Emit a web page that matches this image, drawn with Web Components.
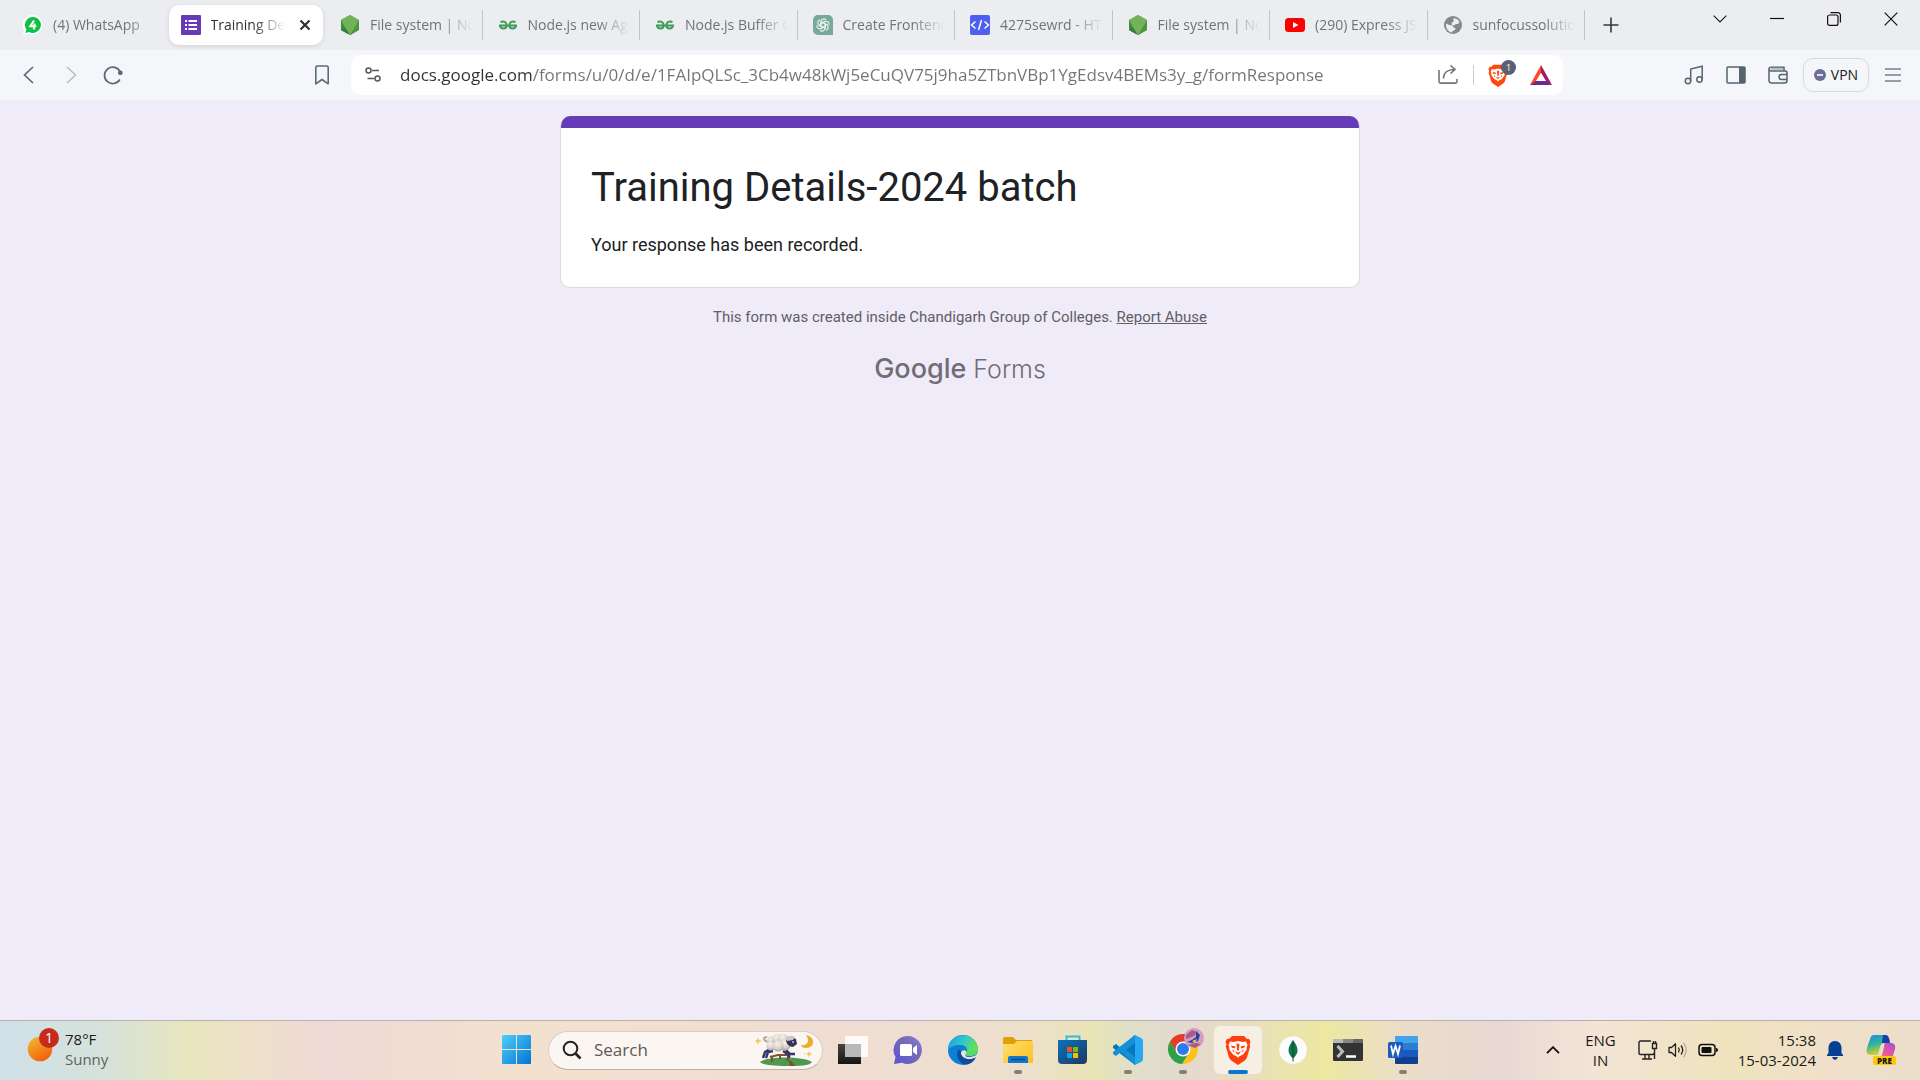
<!DOCTYPE html>
<html lang="en">
<head>
<meta charset="utf-8">
<title>Training Details-2024 batch</title>
<style>
html, body { height: 100%; margin: 0; }
body { font-family: "Open Sans", "Noto Sans", sans-serif; font-size: 15px; line-height: 20px; overflow: hidden; }
</style>
</head>
<body>
<desktop-screen></desktop-screen>
<script>
const svg = (w, h, body, extra = '') => `<svg width="${w}" height="${h}" viewBox="0 0 ${w} ${h}" fill="none" aria-hidden="true" ${extra}>${body}</svg>`;
const braveLion = (bg) => `<path d="M7 1h12l3 3 2-.3 1.500 3.300-1 2.500.7 2-3.400 11.500-2 2.500-6.800 4.500-6.800-4.500-2-2.500L.8 11.500l.7-2-1-2.500L2 3.700 4 4z" fill="${bg}"/><path d="M5 6.500l3.500.6L13 6l4.500 1.100 3.500-.6 1.500 3.500-1 3 .3 1.500-3.800 5-4 2L13 23l-1-1.500-4-2-3.800-5 .3-1.500-1-3z" fill="#fff"/><path d="M6 10.500l4.500.9-.8 2-3-.8zM20 10.500l-4.500.9.8 2 3-.8zM11.500 8.500l1.500.5 1.500-.5-.6 7h-1.800zM10 16.200l3 1.400 3-1.400-2.200 3.200h-1.600zM8 14l1.600 3.500L7.500 16zM18 14l-1.600 3.500 2.100-1.500z" fill="${bg}"/>`;
const ICONS = {
  whatsapp: svg(20, 20, '<path d="M10 0a9.800 9.800 0 1 1-4.500 18.700L0 20l1.200-5A9.800 9.800 0 0 1 10 0z" fill="#fff"/><path d="M10 2a8 8 0 1 1-4 15l-3.600 1 .9-3.600A8 8 0 0 1 10 2z" fill="#0cc143"/><path d="M11 5.500L7.300 11.200h6M11.700 8.500L10.800 14.500" stroke="#fff" stroke-width="2"/>'),
  forms: svg(20, 20, '<rect width="20" height="20" rx="1" fill="#673ab7"/><path d="M4 6h2M4 10h2M4 14h2M7.500 6H16M7.500 10H16M7.500 14H16" stroke="#fff" stroke-width="2.200"/>'),
  node: svg(20, 20, '<path d="M10 0l9 5v10l-9 5-9-5V5z" fill="#5aa348"/><path d="M10 0l9 5-7.500 15-1.500 0L1 5z" fill="#72b35a"/><path d="M1 5l7 14-7-4z" fill="#3f8a40"/><path d="M1 15l4-2.500L10 20z" fill="#34803a"/><path d="M19 5v10l-9 5z" fill="#4f9442"/>'),
  gfg: svg(20, 20, '<g stroke="#3f9c5a" stroke-width="2"><path d="M2.500 7C5.500 5.500 8.700 7 8.700 10.500 8.500 14.500 2.500 14.500 2 10.500M17.500 7C14.500 5.500 11.300 7 11.300 10.500 11.500 14.500 17.500 14.500 18 10.500M1 10.500h18"/></g>'),
  chatgpt: svg(20, 20, '<path d="M5 0h10a5 5 0 0 1 5 5v15H5a5 5 0 0 1-5-5V5a5 5 0 0 1 5-5z" fill="#75a99a"/><g stroke="#e6f0ec" stroke-width="1.200"><path d="M8 11.500V6.500a3 3 0 0 1 5-1.800M12.500 6L8 8.500"/><path d="M8 11.500V6.500a3 3 0 0 1 5-1.800M12.500 6L8 8.500" transform="rotate(60 10 10)"/><path d="M8 11.500V6.500a3 3 0 0 1 5-1.800M12.500 6L8 8.500" transform="rotate(120 10 10)"/><path d="M8 11.500V6.500a3 3 0 0 1 5-1.800M12.500 6L8 8.500" transform="rotate(180 10 10)"/><path d="M8 11.500V6.500a3 3 0 0 1 5-1.800M12.500 6L8 8.500" transform="rotate(240 10 10)"/><path d="M8 11.500V6.500a3 3 0 0 1 5-1.800M12.500 6L8 8.500" transform="rotate(300 10 10)"/></g>'),
  code: svg(20, 20, '<rect width="20" height="20" rx="2" fill="#4c5ff0"/><path d="M5.500 6.500L1.500 10l4 3.500M14.500 6.500l4 3.500-4 3.500M11.500 5l-3 10" stroke="#fff" stroke-width="1.500"/>'),
  youtube: svg(20, 20, '<rect y="3" width="20" height="14" rx="3.500" fill="#f00"/><path d="M8 7l5.500 3L8 13z" fill="#fff"/>'),
  globe: svg(20, 20, '<circle cx="10" cy="10" r="9" fill="#858789"/><path d="M10.500 3.200c3 0 5 1.600 6 3.800l-1.500 2h-2.500l-1 1.500-2.500-.5-.5-2 2-1.500zM3 8.500l3.500 1.500 3 .5 1 2 2 .5-.5 2-2.500 1-.5 1.500c-3.500-.5-6.500-4-6-9z" fill="#ecedf1"/>'),
  close: svg(12, 12, '<path d="M1.500 1.500l9 9m0-9l-9 9" stroke="#2f3034" stroke-width="2.200"/>'),
  plus: svg(16, 16, '<path d="M8 .5v15M.5 8h15" stroke="#35363a" stroke-width="1.600"/>'),
  caret: svg(14, 8, '<path d="M.7.7L7 7 13.300.7" stroke="#222" stroke-width="1.200"/>'),
  minimize: svg(14, 14, '<path d="M0 6.500h14" stroke="#111" stroke-width="1.200"/>'),
  restore: svg(14, 14, '<rect x=".6" y="3" width="10.400" height="10.400" rx="2" stroke="#111" stroke-width="1.200"/><path d="M3.500.7H11a2.400 2.400 0 0 1 2.400 2.400v7.400" stroke="#111" stroke-width="1.200"/>'),
  winclose: svg(14, 14, '<path d="M.7.7l12.600 12.600M13.300.7L.7 13.300" stroke="#111" stroke-width="1.200"/>'),
  back: svg(20, 20, '<path d="M14 2L5.500 10l8.500 8" stroke="#5a6b77" stroke-width="1.700"/>'),
  forward: svg(20, 20, '<path d="M6 2l8.500 8L6 18" stroke="#b7c0c8" stroke-width="1.700"/>'),
  reload: svg(20, 20, '<path d="M16.800 14.500A8.200 8.200 0 1 1 17.200 7" stroke="#5a6b77" stroke-width="1.700"/><circle cx="17.300" cy="7.800" r="2.400" fill="#5a6b77"/>'),
  bookmark: svg(20, 20, '<path d="M3.800 2.500c0-.9.5-1.500 1.400-1.500h9.600c.9 0 1.400.6 1.400 1.500v16.300L10 14.500l-6.200 4.300z" stroke="#5a6b77" stroke-width="1.600" stroke-linejoin="round"/>'),
  tune: svg(16, 16, '<g stroke="#53585c" stroke-width="1.500"><circle cx="3.500" cy="3.500" r="2.500"/><circle cx="12.500" cy="11.500" r="2.500"/><path d="M7 3.500h7M2.500 11.500H9"/></g>'),
  share: svg(20, 20, '<path d="M1 5v11.500c0 1 .6 1.600 1.500 1.600h15c.9 0 1.500-.6 1.500-1.600V14M5.500 13.500C5.500 8 9.500 4.500 16.500 4.500M12.500.5l4.500 4-4.500 4" stroke="#72767a" stroke-width="1.600"/>'),
  brave: `<svg width="20" height="23" viewBox="0 0 26 30" aria-hidden="true">${braveLion('#ff4a0f')}</svg>`,
  bat: svg(22, 20, '<path d="M11 0l11 20-6-3L11 8z" fill="#9e1f63"/><path d="M11 0L0 20l6-3 5-9z" fill="#ff4724"/><path d="M0 20h22l-6-4H6z" fill="#662d91"/><path d="M11 8l5 8H6z" fill="#fff"/>'),
  music: svg(20, 20, '<g stroke="#53666f" stroke-width="1.500"><circle cx="4" cy="16" r="2.700"/><circle cx="15.500" cy="14.500" r="2.700"/><path d="M6.700 16V4l11.500-2.800V14.500"/></g>'),
  panel: svg(20, 20, '<rect x="1" y="2" width="18" height="16" rx="1" stroke="#53666f" stroke-width="1.500"/><path d="M13 2h6v16h-6z" fill="#53666f"/>'),
  wallet: svg(20, 20, '<path d="M1 4v11.500a2.500 2.500 0 0 0 2.500 2.500h13c1.500 0 2.500-1 2.500-2.500v-8C19 6.500 18 6 17 6H3C1.800 6 1 5.200 1 4s.8-1.800 2-1.800h13V6M19 9.500h-5.500a2.500 2.500 0 0 0 0 5H19" stroke="#53666f" stroke-width="1.500"/><path d="M3 2.800h12V5H3z" fill="#b9c3c8"/>'),
  vpn: svg(12, 12, '<circle cx="6" cy="6" r="6" fill="#6d7096"/><path d="M3 6h6" stroke="#fff" stroke-width="1.600"/>'),
  menu: svg(16, 14, '<path d="M0 1h16M0 7h16M0 13h16" stroke="#71838c" stroke-width="1.500"/>'),
  sun: svg(26, 26, '<defs><linearGradient id="s" x1="0" y1="0" x2=".6" y2="1"><stop stop-color="#efbd36"/><stop offset="1" stop-color="#f3630c"/></linearGradient></defs><circle cx="13" cy="13" r="12.300" fill="url(#s)"/>'),
  start: svg(30, 30, '<defs><linearGradient id="w" x1="0" y1="0" x2="1" y2="1" ><stop stop-color="#4cd0fb"/><stop offset="1" stop-color="#0474d3"/></linearGradient></defs><path d="M1.500 0H14v14H0V1.500Q0 0 1.500 0zM15 0h13q1 0 1 1v13H15zM0 15h14v14H1q-1 0-1-1zM15 15h14v13q0 1-1 1H15z" fill="url(#w)"/>'),
  search: svg(20, 20, '<circle cx="8.500" cy="8.500" r="6.800" stroke="#242424" stroke-width="2"/><path d="M13.500 13.500l5 5" stroke="#242424" stroke-width="2.600"/>'),
  sheep: svg(60, 34, '<defs><radialGradient id="wool" cx=".45" cy=".3" r=".75"><stop stop-color="#f4f1ec"/><stop offset=".6" stop-color="#d9d2ca"/><stop offset="1" stop-color="#a0968f"/></radialGradient></defs><path d="M5 29c6-6 44-6 52 0-2 4-13 4-26 4S8 32 5 29z" fill="#4f9850"/><path d="M32 26q6 2 8 7h-5q0-5-5-7z" fill="#80502b"/><path d="M17 29v-5m8 2v-5m8 6v-5M15 24l8-2h10" stroke="#81522e" stroke-width="2"/><path d="M15 16l-5 3-2 6M18 18l-5 1-2 6M31 17l4 4h5M28 18l6 4v3" stroke="#33366f" stroke-width="2.400"/><path d="M12 9Q6 5 12 4" stroke="#aaa095" stroke-width="2"/><g fill="url(#wool)"><circle cx="17" cy="8" r="5"/><circle cx="16" cy="13" r="4.500"/><circle cx="22" cy="6" r="5"/><circle cx="28" cy="6" r="5.500"/><circle cx="30" cy="12" r="5.500"/><circle cx="23" cy="13" r="5.500"/></g><path d="M31 7q5-4 10-1l1 5-4 3q-6 0-7-7z" fill="#34315f"/><path d="M31 5q4-4 9-1l-2 3-6 1z" fill="#cfc7be"/><path d="M37 9h2" stroke="#fff"/><path d="M51 2c9 1 10 13 0 13-3 0-5-2-5-3 7 1 9-4 5-10z" fill="#e9ad2e"/><path d="M3 4l1 3 3 1-3 1-1 3-1-3-3-1 3-1zM8 3l1 2 2 0-2 1zM54 18l1 2 2 1-2 1-1 2-1-2-2-1 2-1zM49 20h1v1h-1z" fill="#f2c45a"/>'),
  taskview: svg(30, 30, '<defs><linearGradient id="tv" y2="1" x2="0"><stop stop-color="#444"/><stop offset="1" stop-color="#151515"/></linearGradient></defs><path d="M0 9h23v20H0z" fill="url(#tv)"/><rect x="7" y="1" width="23" height="21" rx="1" fill="#fff" opacity=".85"/><path d="M7 9h16v13H7z" fill="#b9b9b9"/>'),
  chat: svg(30, 30, '<defs><linearGradient id="ch" x1="1" x2="0" y2="1"><stop stop-color="#7f86e3"/><stop offset=".35" stop-color="#7a6bb8"/><stop offset="1" stop-color="#5755d5"/></linearGradient></defs><path d="M15 1a14 14 0 1 1-6 26.700L1 29l1.500-7A14 14 0 0 1 15 1z" fill="url(#ch)"/><rect x="7" y="9" width="12" height="12" rx="1.500" fill="#fff"/><path d="M20 13l4-3v10l-4-3z" fill="#fff"/>'),
  edge: svg(30, 30, '<defs><linearGradient id="e1" x2="1" y2=".4"><stop stop-color="#1c9bdd"/><stop offset=".5" stop-color="#31c4d2"/><stop offset="1" stop-color="#64e34d"/></linearGradient></defs><circle cx="15" cy="15" r="15" fill="#0b80d4"/><path d="M0 13C2-3 28-5 30 14c0 5-4 7-9 7-3 0-4-1-3-3 3-5-1-8-6-8-6 0-10 2-12 5z" fill="url(#e1)"/><path d="M11 14c-4 5-1 13 5 15.500 5 .5 9-2 11-6-6 3-15 1-14.500-7z" fill="#0b4fa0"/><path d="M30 15c0 5-4 7-9 7-4 0-4-1-3-3 2-3-2-5-4-3-4 4 3 11 13 7l3 1z" fill="#f0dfd4"/><path d="M30 14c0 5-4 7-9 7-3 0-4-1-3-3z" fill="#58d866"/><path d="M13 15c-2 8 8 12 15 7-2 4-7 7-12 6-5-3-6-8-3-13z" fill="#104d97"/>'),
  explorer: svg(30, 30, '<defs><linearGradient id="ex" x2="1" y2="1"><stop stop-color="#ffe070"/><stop offset="1" stop-color="#fdbd22"/></linearGradient></defs><path d="M0 4q0-2 2-2h8l3 3h16v6H0z" fill="#dfa005"/><path d="M0 9h11l3-3h15q1 0 1 1v21H0z" fill="url(#ex)"/><path d="M5 28v-5q0-2 2-2h16q2 0 2 2v5z" fill="#1077cb"/><path d="M8 24.500h14" stroke="#084b8c" stroke-width="1.500"/>'),
  store: svg(30, 30, '<defs><linearGradient id="st" x2="1" y2="1"><stop stop-color="#0873bd"/><stop offset="1" stop-color="#21375f"/></linearGradient></defs><path d="M8.500 6V1.500h13V6" stroke="#29bdf0" stroke-width="2"/><path d="M0 5h29v20q0 4-4 4H4q-4 0-4-4z" fill="url(#st)"/><path d="M9 12h5v5H9z" fill="#f15022"/><path d="M15 12h5v5h-5z" fill="#7fba00"/><path d="M9 18h5v5H9z" fill="#00a4ef"/><path d="M15 18h5v5h-5z" fill="#ffb900"/>'),
  vscode: svg(30, 30, '<path d="M22 0L8 13 3 9 0 11v2l22 17z" fill="#0877b9"/><path d="M22 30L8 17l-5 4-3-2v-2L22 0v8l-9 7 9 7z" fill="#1390d8"/><path d="M22 0l6 3q2 1 2 3v18q0 2-2 3l-6 3z" fill="#27a8f2"/>'),
  chrome: svg(40, 38, '<circle cx="15" cy="22" r="15" fill="#fcc31e"/><path d="M2 14.500A15 15 0 0 1 28 14.500H15l-6.500 11z" fill="#e33b2e"/><path d="M2 14.500A15 15 0 0 0 14 37l7-11.500H8.500z" fill="#2ba14b"/><circle cx="15" cy="22" r="7.500" fill="#fff"/><circle cx="15" cy="22" r="6" fill="#2f7bea"/><circle cx="26" cy="11" r="10" fill="#d79bc1"/><path d="M18 8l6-5 5 2-3 4-8 3zM27 16l6 1-6 4-7-3z" fill="#a95b83"/><path d="M28 4l4 4-2 6-6 2-5-1 5-2 4-3z" fill="#25439b"/><path d="M24 14l5-2-2 4z" fill="#d8d155"/>'),
  lion: svg(26, 30, braveLion('#ff3f0f')),
  mongo: svg(28, 28, '<circle cx="14" cy="14" r="13.800" fill="#fbfcfb"/><path d="M14 4.500c6 7 6 13 0 18-6-5-6-11 0-18z" fill="#12744a"/><path d="M14 4.500v21" stroke="#054a35"/>'),
  terminal: svg(30, 22, '<rect width="30" height="22" rx="1.500" fill="#333"/><path d="M0 4V1q0-1 1-1h9v4z" fill="#b8b8b8"/><path d="M10 0h10v4H10z" fill="#888"/><path d="M20 0h9q1 0 1 1v3H20z" fill="#666"/><path d="M4.500 7l5 5.500-5 5.500" stroke="#bcbcbc" stroke-width="3"/><path d="M13 17.500h10" stroke="#fff" stroke-width="2.500"/>'),
  word: svg(30, 30, '<path d="M7 1.500Q7 1 8 1h21q1 0 1 1v6H7z" fill="#42a3ed"/><path d="M7 8h23v7H7z" fill="#2b7cd3"/><path d="M7 15h23v7H7z" fill="#185abd"/><path d="M7 22h23v6q0 1-1 1H8q-1 0-1-1z" fill="#103f91"/><rect y="7" width="15" height="16" rx="1.500" fill="#1b5cbe"/><path d="M3 10.500l2 8.500 2.500-8 2.500 8 2-8.500" stroke="#fff" stroke-width="1.800"/>'),
  up: svg(14, 8, '<path d="M1 7.200L7 1.200l6 6" stroke="#111" stroke-width="1.800"/>'),
  network: svg(20, 20, '<g stroke="#222" stroke-width="1.400"><path d="M13 1H2.500Q1 1 1 2.500V13q0 1.500 1.500 1.500h12Q16 14.500 16 13M4 19h10M7 14.500V19m4-4.500V19"/><path d="M14.500 3.500h4v5h-4zM15.500 1v2.500m2-2.500v2.500M16.500 8.500V19"/></g>'),
  speaker: svg(20, 16, '<g stroke="#222" stroke-width="1.300"><path d="M1 5.500v5h2.500l4 3.800V1.700l-4 3.800z" stroke-linejoin="round"/><path d="M10.500 5.500q1.500 2.500 0 5M13 3.500q3.500 4.500 0 9"/><path d="M15.500 1q5.500 7 0 14" stroke="#b9ac98"/></g>'),
  battery: svg(20, 14, '<rect x="1" y="1.500" width="16" height="11" rx="3" stroke="#111" stroke-width="1.500"/><rect x="3.500" y="4" width="10" height="6" rx="1" fill="#111"/><path d="M18 5q2 0 2 2t-2 2z" fill="#111"/>'),
  bell: svg(18, 20, '<path d="M9 1c4 0 6.500 3 6.500 7v5l1.500 2v1H1v-1l1.500-2V8C2.500 4 5 1 9 1zM6 17h6q-1 3-3 3t-3-3z" fill="#053f93"/>'),
  copilot: svg(30, 28, '<defs><linearGradient id="c1" x2=".3" y2="1"><stop stop-color="#1c8fe8"/><stop offset=".5" stop-color="#2fb39b"/><stop offset="1" stop-color="#d6d02c"/></linearGradient><linearGradient id="c2" x1="1" x2="0" y2="1"><stop stop-color="#a64be0"/><stop offset=".6" stop-color="#ee5c90"/><stop offset="1" stop-color="#f98b49"/></linearGradient></defs><path d="M8 0h11q3 0 4 8h-4q-4 0-5 4l-2 8H5Q-1 20 1 13L4 4q1-4 4-4z" fill="url(#c1)"/><path d="M17 0h3q3 0 4 8h-8z" fill="#183fa5"/><path d="M19 8h7q4 1 3 6l-3 10H11q4 0 5-4l2-8q0-3 1-4z" fill="url(#c2)"/>')
};

/* Registers an element whose markup comes from a render function. */
function define(tag, render) {
  customElements.define(tag, class extends HTMLElement {
    connectedCallback() {
      if (this.shadowRoot) return;
      const t = document.createElement('template');
      t.innerHTML = render(this);
      this.attachShadow({ mode: 'open' }).append(t.content.cloneNode(true));
    }
  });
}

const resetButton = 'button{all:unset;box-sizing:border-box;display:flex;align-items:center;justify-content:center;cursor:default}';

define('app-icon', el => `<style>:host{display:flex;flex:none}svg{display:block}</style>${ICONS[el.getAttribute('name')]}`);

define('icon-button', el => `<style>:host{display:block;flex:none}${resetButton}
  button{width:var(--button-width,34px);height:var(--button-height,34px)}</style>
  <button aria-label="${el.getAttribute('label')}"><app-icon name="${el.getAttribute('icon')}"></app-icon></button>`);

define('browser-tab', el => `<style>
  :host{display:flex;flex:1;min-width:0;height:50px;align-items:center;box-sizing:border-box;padding:5px 0;color:#717377}
  ${resetButton}
  .tab{display:flex;align-items:center;flex:1;min-width:0;height:40px;margin:0 1px;padding:0 8px 0 12px;border-radius:10px;box-sizing:border-box}
  :host([divided]) .tab{padding-left:14px}
  .select{flex:1;min-width:0;gap:10px;justify-content:flex-start}
  .title{flex:1;min-width:0;overflow:hidden;white-space:nowrap;font-size:14px;line-height:20px;mask-image:linear-gradient(to right,#000 calc(100% - 32px),transparent)}
  .close{width:20px;height:20px;margin-left:10px}
  :host([selected]){color:#303135}
  :host([selected]) .tab{background:#fff;box-shadow:0 1px 4px #0000001f;margin-right:2px}
  .rule{width:1px;height:30px;background:#c4c5c9}
  </style><div class="tab"><button class="select" role="tab"><app-icon name="${el.getAttribute('icon')}"></app-icon><span class="title"><slot></slot></span></button>
  ${el.hasAttribute('selected') ? '<button class="close" aria-label="Close tab"><app-icon name="close"></app-icon></button>' : ''}</div>
  ${el.hasAttribute('divided') ? '<div class="rule"></div>' : ''}`);

define('tab-strip', () => `<style>
  :host{display:flex;height:50px;background:#ecedf1}
  .tabs{flex:1;display:flex;min-width:0;padding-left:10px}
  .new{--button-width:32px;padding:8px 0 0 10px}
  .window{width:293px;box-sizing:border-box;padding-right:1px;display:flex;justify-content:flex-end;--button-width:57px;--button-height:38px}
  </style><div class="tabs" role="tablist">
  <browser-tab icon="whatsapp">(4) WhatsApp</browser-tab>
  <browser-tab icon="forms" selected>Training De</browser-tab>
  <browser-tab icon="node" divided>File system | No</browser-tab>
  <browser-tab icon="gfg" divided>Node.js new Ag</browser-tab>
  <browser-tab icon="gfg" divided>Node.js Buffer C</browser-tab>
  <browser-tab icon="chatgpt" divided>Create Frontend</browser-tab>
  <browser-tab icon="code" divided>4275sewrd - HT</browser-tab>
  <browser-tab icon="node" divided>File system | No</browser-tab>
  <browser-tab icon="youtube" divided>(290) Express JS</browser-tab>
  <browser-tab icon="globe" divided>sunfocussolutio</browser-tab></div>
  <icon-button class="new" icon="plus" label="New tab"></icon-button>
  <div class="window"><icon-button icon="caret" label="Search tabs"></icon-button><icon-button icon="minimize" label="Minimize"></icon-button><icon-button icon="restore" label="Restore"></icon-button><icon-button icon="winclose" label="Close"></icon-button></div>`);

define('address-bar', () => `<style>
  :host{display:flex;flex:1;min-width:0;height:40px;background:#fff;border-radius:10px;align-items:center;padding:0 11px 0 14px;box-sizing:border-box}
  ${resetButton}
  input{flex:1;min-width:0;border:0;outline:0;padding:0;margin:0 16px 0 19px;height:30px;font:17px/30px "Open Sans","Noto Sans",sans-serif;color:transparent;background:linear-gradient(to right,#303135 var(--host-width,132px),#737478 var(--host-width,132px));background-clip:text;-webkit-background-clip:text}
  .rule{width:1px;height:20px;background:#ccc;margin:0 14px 0 15px}
  .shield{position:relative;width:22px;height:26px;margin-right:20px;justify-content:flex-start}
  .count{position:absolute;left:13px;top:-2px;width:15px;height:15px;border-radius:8px;background:#5c6074;color:#fff;font-size:9px;line-height:15px;text-align:center}
  </style><app-icon name="tune"></app-icon>
  <input aria-label="Address" spellcheck="false" value="docs.google.com/forms/u/0/d/e/1FAIpQLSc_3Cb4w48kWj5eCuQV75j9ha5ZTbnVBp1YgEdsv4BEMs3y_g/formResponse">
  <button aria-label="Share"><app-icon name="share"></app-icon></button><div class="rule"></div>
  <button class="shield" aria-label="Shields"><app-icon name="brave"></app-icon><span class="count">1</span></button>
  <button aria-label="Rewards"><app-icon name="bat"></app-icon></button>`);

define('browser-toolbar', () => `<style>
  :host{display:flex;height:50px;align-items:center;background:#f5f6f9}
  .side{display:flex;align-items:center;gap:8px;box-sizing:border-box}
  .left{width:351px;padding:0 12px}.left .mark{margin-left:auto}
  .right{width:357px;padding-right:11px;justify-content:flex-end}
  ${resetButton}
  .vpn{width:66px;height:34px;border:1px solid #d5dcdf;border-radius:10px;gap:5px;font-size:14px;color:#202124}
  .menu{--button-width:32px}
  </style><div class="side left"><icon-button icon="back" label="Back"></icon-button><icon-button icon="forward" label="Forward"></icon-button><icon-button icon="reload" label="Reload"></icon-button><icon-button class="mark" icon="bookmark" label="Bookmark"></icon-button></div>
  <address-bar></address-bar>
  <div class="side right"><icon-button icon="music" label="Playlist"></icon-button><icon-button icon="panel" label="Sidebar"></icon-button><icon-button icon="wallet" label="Wallet"></icon-button><button class="vpn"><app-icon name="vpn"></app-icon>VPN</button><icon-button class="menu" icon="menu" label="Menu"></icon-button></div>`);

define('response-card', () => `<style>
  :host{display:block;background:#fff;border:1px solid #dadce0;border-top:0;border-radius:10px;overflow:hidden;box-sizing:border-box;width:100%;max-width:800px}
  .accent{height:12px;margin:0 -1px;background:#673ab7}
  .body{padding:33px 30px 30px}
  ::slotted(h1){margin:0 0 18px;font-weight:400;font-size:40px;line-height:54px}
  ::slotted(p){margin:0;font-size:18px;line-height:24px}
  </style><div class="accent"></div><div class="body"><slot></slot></div>`);

define('form-page', () => `<style>
  :host{display:flex;flex-direction:column;align-items:center;flex:1;min-height:0;background:#f0ebf8;padding-top:16px;box-sizing:border-box;font-family:Roboto,sans-serif;color:#202124}
  .note{margin:17px 0 0;font-size:15px;line-height:24px;color:#605e66}a{color:inherit}
  .brand{display:flex;align-items:baseline;gap:7px;margin-top:23px;font-family:Inter,sans-serif;color:#706d75;text-decoration:none;font-size:25px;line-height:34px;font-weight:300}
  .brand b{font-size:27px;font-weight:500}
  </style><response-card><h1>Training Details-2024 batch</h1><p>Your response has been recorded.</p></response-card>
  <p class="note">This form was created inside Chandigarh Group of Colleges. <a href="#abuse">Report Abuse</a></p>
  <a class="brand" href="#forms"><b>Google</b><span>Forms</span></a>`);

define('task-button', el => `<style>:host{display:block;flex:none}${resetButton}
  button{position:relative;width:48px;height:48px;border-radius:6px}
  :host([active]) button{background:#f6efe4;box-shadow:0 0 0 1px #e6dccb}
  button::after{content:"";position:absolute;bottom:0;width:8px;height:4px;border-radius:2px}
  :host([running]) button::after{background:#877f73}
  :host([active]) button::after{width:20px;background:#0878d1}
  :host([icon=chrome]) app-icon{margin:0 0 8px 10px}
  </style><button aria-label="${el.getAttribute('label')}"><app-icon name="${el.getAttribute('icon')}"></app-icon></button>`);

define('search-box', () => `<style>
  :host{display:flex;align-items:center;box-sizing:border-box;width:275px;height:39px;padding:0 7px 0 13px;border:1px solid #dccdc4;border-bottom-color:#bfb0a8;border-radius:20px;background:#fbf6f2;margin:0 6px 0 7px}
  input{flex:1;min-width:0;border:0;outline:0;background:none;padding:0 0 0 12px;font:17px/24px "Open Sans","Noto Sans",sans-serif;color:#5e5a58}
  input::placeholder{color:#5e5a58;opacity:1}
  </style><app-icon name="search"></app-icon><input type="text" aria-label="Search" placeholder="Search"><app-icon name="sheep"></app-icon>`);

define('weather-widget', () => `<style>
  :host{display:flex;align-items:flex-start}${resetButton}
  button{gap:12px;height:55px;padding-left:27px;text-align:left;color:#1b1b1b}
  .icon{position:relative}.badge{position:absolute;left:12px;top:-8px;width:20px;height:20px;border-radius:10px;background:#c42b1c;color:#fff;font-size:14px;line-height:20px;text-align:center}
  .place{color:#5c625f}span{display:block}
  </style><button><span class="icon"><app-icon name="sun"></app-icon><span class="badge">1</span></span><span>78°F<span class="place">Sunny</span></span></button>`);

define('system-tray', () => `<style>
  :host{display:flex;justify-content:flex-end;align-items:center;color:#1b1b1b;padding:0 24px 2px 0}
  ${resetButton}
  .lang{display:block;text-align:center;margin:0 22px 0 25px}.lang span,.clock span{display:block}
  .quick{gap:10px}.clock{display:block;text-align:right;margin:0 10px 0 20px}
  .bell{margin-right:22px}.pilot{position:relative;height:30px;align-items:flex-start}
  .pre{position:absolute;left:7px;bottom:0;width:23px;height:9px;border-radius:2px;background:#fdc80a;color:#1b1b1b;font-size:8px;line-height:9px;font-weight:800;text-align:center}
  </style><button aria-label="Hidden icons"><app-icon name="up"></app-icon></button>
  <button class="lang"><span>ENG</span><span>IN</span></button>
  <button class="quick" aria-label="Quick settings"><app-icon name="network"></app-icon><app-icon name="speaker"></app-icon><app-icon name="battery"></app-icon></button>
  <button class="clock"><span>15:38</span><span>15-03-2024</span></button>
  <button class="bell" aria-label="Notifications"><app-icon name="bell"></app-icon></button>
  <button class="pilot" aria-label="Copilot"><app-icon name="copilot"></app-icon><span class="pre">PRE</span></button>`);

define('task-bar', () => `<style>
  :host{display:grid;grid-template-columns:1fr auto 1fr;height:60px;box-sizing:border-box;border-top:1px solid #b9b1ad;
  background:linear-gradient(to right,#cfe0e8,#d5e2dc 5%,#e7e6bd 10%,#eedfc9 13%,#eddad5 17%,#f2e1cf 27%,#f2dfd1 33%,#efddd2 45%,#eddfce 53%,#e9e4b5 57%,#dfdfca 59%,#e5d9d0 62%,#ece8a0 69%,#ecddc9 73%,#e7d8d3 78%,#f4e4d6 83%,#efe3bd 90%,#f0e0c9 95%,#ecdecb)}
  .apps{display:flex;align-items:center;gap:7px;padding-bottom:1px}
  .lead{display:flex;align-items:center;margin-right:-7px}
  </style><weather-widget></weather-widget>
  <div class="apps"><div class="lead"><task-button icon="start" label="Start"></task-button><search-box></search-box></div>
  <task-button icon="taskview" label="Task view"></task-button><task-button icon="chat" label="Chat"></task-button><task-button icon="edge" label="Edge"></task-button><task-button icon="explorer" label="File Explorer" running></task-button><task-button icon="store" label="Store"></task-button><task-button icon="vscode" label="Visual Studio Code" running></task-button><task-button icon="chrome" label="Chrome" running></task-button><task-button icon="lion" label="Brave" active></task-button><task-button icon="mongo" label="MongoDB Compass"></task-button><task-button icon="terminal" label="Terminal"></task-button><task-button icon="word" label="Word" running></task-button></div>
  <system-tray></system-tray>`);

define('desktop-screen', () => `<style>:host{display:flex;flex-direction:column;height:100vh}</style>
  <tab-strip></tab-strip><browser-toolbar></browser-toolbar><form-page></form-page><task-bar></task-bar>`);
</script>
</body>
</html>
